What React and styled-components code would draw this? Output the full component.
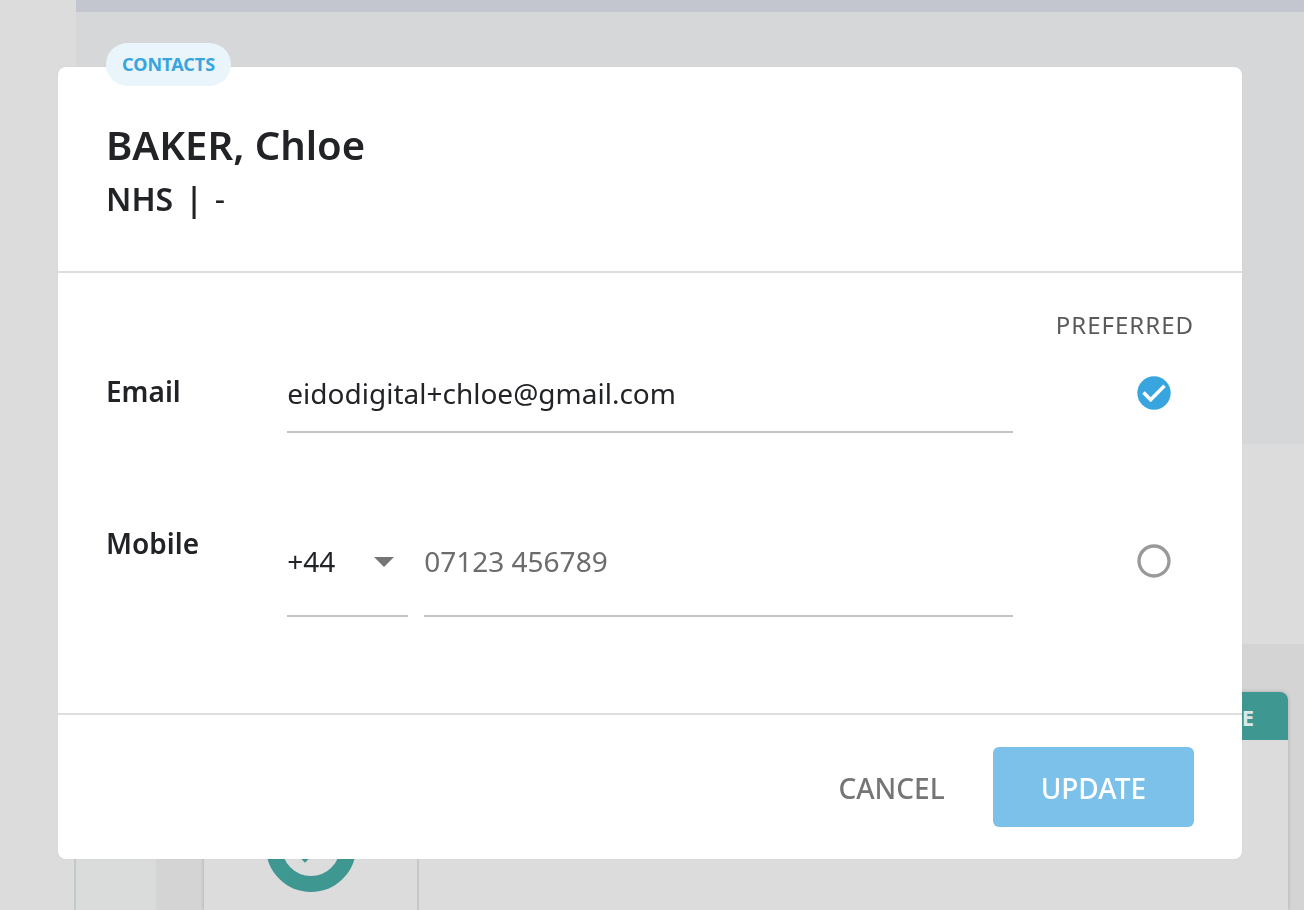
import * as React from 'react';
import styled, { createGlobalStyle } from 'styled-components';

const GlobalStyle = createGlobalStyle`
    * {
        box-sizing: border-box;
    }
    body {
        margin: 0;
        background: #dcdcdc;
        color: #212326;
        font-family: 'Noto Sans', 'Open Sans', sans-serif;
        overflow: hidden;
    }
`;

const Page = styled.div`
    display: flex;
    height: 100vh;
    overflow: hidden;
`;

const Sidebar = styled.div`
    flex: 0 0 76px;
    background: #dcdcdc;
`;

const Main = styled.main`
    flex: 1;
    display: flex;
    flex-direction: column;
`;

const TopBar = styled.div`
    flex: 0 0 12px;
    background: #c3c6cf;
`;

const Banner = styled.div`
    flex: 0 0 432px;
    background: #d6d7d9;
`;

const Summary = styled.div`
    flex: 0 0 200px;
    background: #dcdcdc;
`;

const Content = styled.div`
    flex: 1;
    display: flex;
    background: #d4d4d4;
`;

const SideNav = styled.div`
    flex: 0 0 82px;
    margin-left: -2px;
    border-left: 2px solid #c2c9c8;
    background: #dadcdc;
`;

const Card = styled.section`
    flex: 1;
    display: flex;
    flex-direction: column;
    margin: 48px 16px 0 48px;
    border-radius: 8px 8px 0 0;
    background: #dcdcdc;
    box-shadow: 0 0 4px rgba(0, 0, 0, 0.2);
`;

const CardHeader = styled.div`
    padding-right: 34px;
    border-radius: 8px 8px 0 0;
    background: #3f9791;
    color: #dbe7e8;
    font-size: 22px;
    font-weight: 700;
    line-height: 50px;
    height: 48px;
    text-align: right;
`;

const CardStatus = styled.div`
    flex: 1;
    width: 215px;
    padding: 62px 0 0 62px;
    border-right: 2px solid #c8c8c8;
`;

const Overlay = styled.div`
    position: fixed;
    inset: 0;
    padding: 67px 62px 51px 58px;
`;

const Dialog = styled.form`
    position: relative;
    border-radius: 8px;
    background: #fff;
    box-shadow: 0 0 2px rgba(0, 0, 0, 0.06);
`;

const Badge = styled.div`
    position: absolute;
    top: -24px;
    left: 48px;
    padding: 0 16px;
    border-radius: 22px;
    background: #eaf5fb;
    color: #38a5de;
    font-size: 18px;
    font-weight: 700;
    line-height: 43px;
`;

const DialogHeader = styled.header`
    padding: 48px;
    border-bottom: 2px solid #dedede;
`;

const Name = styled.h1`
    margin: 0;
    font-size: 40px;
    font-weight: 600;
    line-height: 60px;
`;

const Reference = styled.p`
    display: flex;
    gap: 12px;
    margin: 0;
    font-size: 32px;
    font-weight: 600;
    line-height: 48px;
`;

const Plain = styled.span`
    font-weight: 400;
`;

const DialogBody = styled.div`
    padding: 32px 48px 96px;
    border-bottom: 2px solid #dedede;
`;

const Preferred = styled.div`
    margin-bottom: 8px;
    color: #5a5a5a;
    font-size: 24px;
    letter-spacing: 1px;
    line-height: 40px;
    text-align: right;
`;

const Row = styled.div`
    display: grid;
    grid-template-columns: 2fr 8fr 2fr;
    align-items: center;
    height: ${props => props.$height};
    & + & {
        margin-top: 72px;
    }
`;

const Label = styled.label`
    align-self: start;
    font-size: 28px;
    font-weight: 600;
    line-height: 76px;
`;

const Fields = styled.div`
    display: flex;
    gap: 16px;
    height: 100%;
`;

const fieldStyle = `
    height: 100%;
    margin: 0;
    padding: 2px 0 0;
    border: 0;
    border-bottom: 2px solid #c4c4c4;
    border-radius: 0;
    outline: 0;
    background: transparent;
    color: #212326;
    font-family: inherit;
    font-size: 28px;
`;

const Input = styled.input`
    ${fieldStyle}
    flex: 1;
    min-width: 0;
    &::placeholder {
        color: #6c6c6c;
        opacity: 1;
    }
`;

const SelectWrapper = styled.div`
    display: grid;
    flex: 0 0 calc(100% / 6);
    align-items: center;
    svg {
        grid-area: 1 / 1;
        justify-self: end;
        margin-right: 4px;
        fill: #757575;
        pointer-events: none;
    }
`;

const Select = styled.select`
    ${fieldStyle}
    grid-area: 1 / 1;
    width: 100%;
    appearance: none;
`;

const RadioLabel = styled.label`
    display: grid;
    justify-self: end;
    margin-right: 20px;
    cursor: pointer;
    svg {
        grid-area: 1 / 1;
        fill: ${props => props.$checked ? '#38a5de' : '#999'};
    }
`;

const Radio = styled.input`
    grid-area: 1 / 1;
    width: 40px;
    height: 40px;
    margin: 0;
    opacity: 0;
`;

const DialogFooter = styled.footer`
    display: flex;
    justify-content: flex-end;
    padding: 32px 48px;
`;

const Button = styled.button`
    height: 80px;
    padding: 2px 48px 0;
    border: 0;
    border-radius: 6px;
    background: ${props => props.$primary ? '#7bc1ea' : 'transparent'};
    color: ${props => props.$primary ? '#fff' : '#757575'};
    font-family: inherit;
    font-size: 28px;
    font-weight: 500;
    cursor: pointer;
`;

function PreferredRadio({ value, label, preferred, onChange }) {
    const checked = preferred === value;
    return (
        <RadioLabel $checked={checked}>
            <Radio
                type="radio"
                name="preferred"
                value={value}
                aria-label={label}
                checked={checked}
                onChange={() => onChange(value)}
            />
            <svg viewBox="0 0 24 24" width="40" height="40">
                {checked ? (
                    <React.Fragment>
                        <circle cx="12" cy="12" r="10" />
                        <path d="M5.7 11.7l4.3 4.3 8.3-8.4" fill="none" stroke="#fff" strokeWidth="2.1" />
                    </React.Fragment>
                ) : (
                    <path d="M12 2C6.48 2 2 6.48 2 12s4.48 10 10 10 10-4.48 10-10S17.52 2 12 2zm0 18c-4.42 0-8-3.58-8-8s3.58-8 8-8 8 3.58 8 8-3.58 8-8 8z" />
                )}
            </svg>
        </RadioLabel>
    );
}

export default function App() {
    const [email, setEmail] = React.useState('eidodigital+chloe@gmail.com');
    const [mobile, setMobile] = React.useState('');
    const [preferred, setPreferred] = React.useState('email');

    return (
        <React.Fragment>
            <GlobalStyle />
            <Page>
                <Sidebar />
                <Main>
                    <TopBar />
                    <Banner />
                    <Summary />
                    <Content>
                        <SideNav />
                        <Card>
                            <CardHeader>E</CardHeader>
                            <CardStatus>
                                <svg viewBox="0 0 90 90" width="90" height="90">
                                    <circle cx="45" cy="45" r="37" fill="none" stroke="#3f9791" strokeWidth="16" />
                                    <path d="M27 43l12 12 24-24" fill="none" stroke="#3f9791" strokeWidth="8" />
                                </svg>
                            </CardStatus>
                        </Card>
                    </Content>
                </Main>
            </Page>
            <Overlay>
                <Dialog role="dialog" aria-labelledby="name" onSubmit={e => e.preventDefault()}>
                    <Badge>CONTACTS</Badge>
                    <DialogHeader>
                        <Name id="name">BAKER, Chloe</Name>
                        <Reference>
                            <span>NHS</span>
                            <span>|</span>
                            <Plain>-</Plain>
                        </Reference>
                    </DialogHeader>
                    <DialogBody>
                        <Preferred>PREFERRED</Preferred>
                        <Row $height="80px">
                            <Label htmlFor="email">Email</Label>
                            <Fields>
                                <Input id="email" type="email" value={email} onChange={e => setEmail(e.target.value)} />
                            </Fields>
                            <PreferredRadio value="email" label="Prefer email" preferred={preferred} onChange={setPreferred} />
                        </Row>
                        <Row $height="112px">
                            <Label htmlFor="mobile">Mobile</Label>
                            <Fields>
                                <SelectWrapper>
                                    <Select aria-label="Country code" defaultValue="+44">
                                        <option>+44</option>
                                    </Select>
                                    <svg viewBox="0 0 40 40" width="40" height="40">
                                        <path d="M10 16l10 10 10-10z" />
                                    </svg>
                                </SelectWrapper>
                                <Input
                                    id="mobile"
                                    type="tel"
                                    placeholder="07123 456789"
                                    value={mobile}
                                    onChange={e => setMobile(e.target.value)}
                                />
                            </Fields>
                            <PreferredRadio value="mobile" label="Prefer mobile" preferred={preferred} onChange={setPreferred} />
                        </Row>
                    </DialogBody>
                    <DialogFooter>
                        <Button type="button">CANCEL</Button>
                        <Button type="submit" $primary>UPDATE</Button>
                    </DialogFooter>
                </Dialog>
            </Overlay>
        </React.Fragment>
    );
}
